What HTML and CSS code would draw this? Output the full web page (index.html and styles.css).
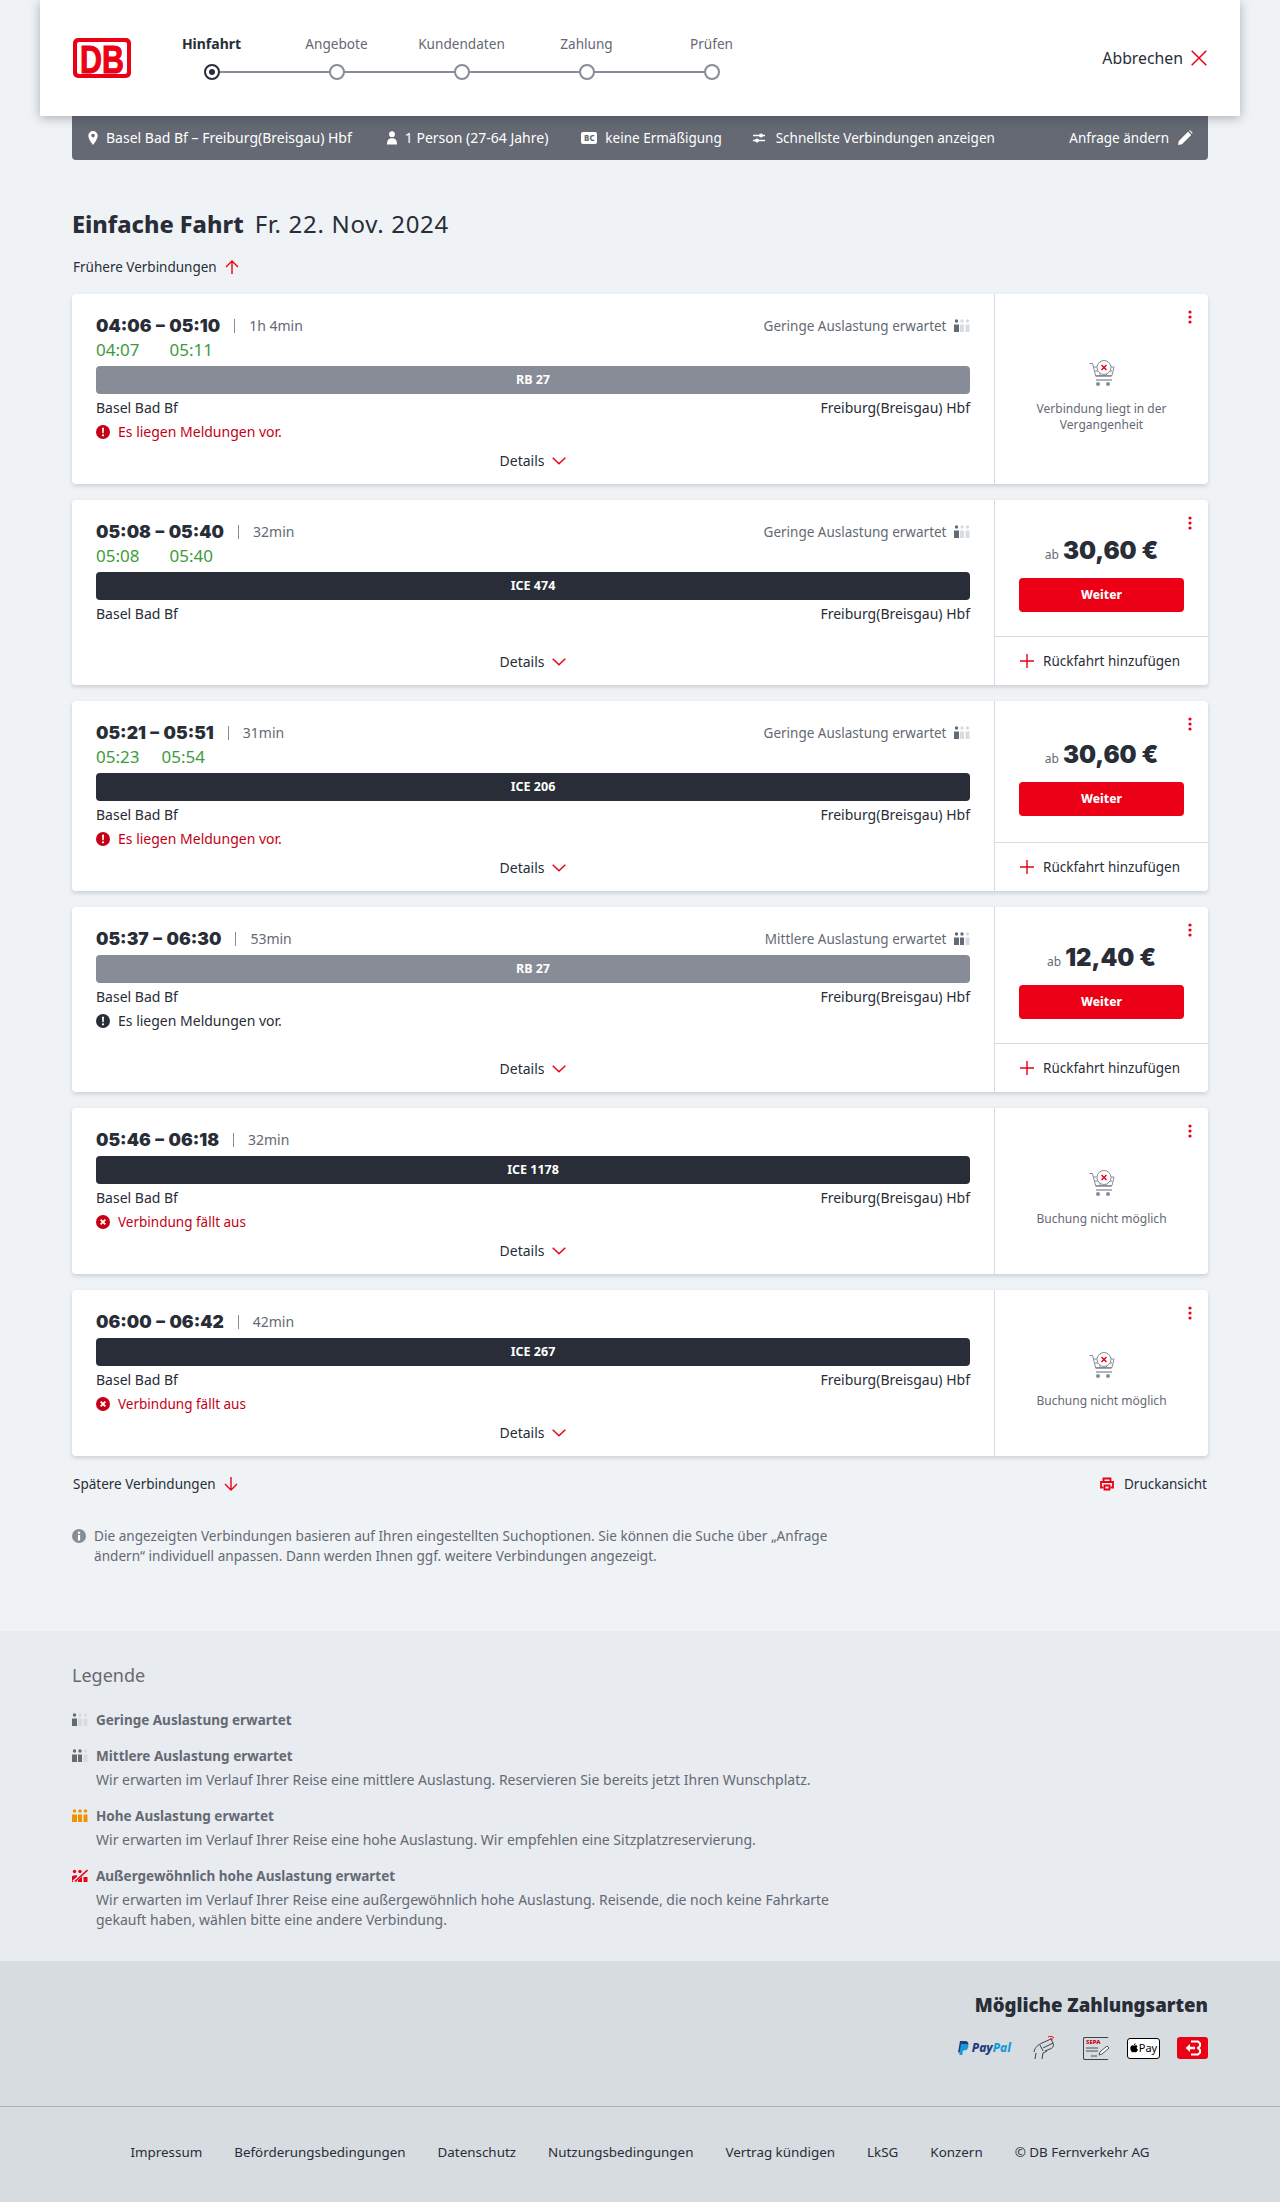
FILE: index.html
```html
<!DOCTYPE html>
<html lang="de">
<head>
<meta charset="utf-8">
<title>Einfache Fahrt</title>
<link rel="stylesheet" href="styles.css">
</head>
<body>
<svg class="sprite" aria-hidden="true">
  <symbol id="occ1" viewBox="0 0 16 14"><circle cx="2.500" cy="2" r="1.700" fill="#646973"/><path d="M0 5.500h5V13H0z" fill="#646973"/><circle cx="8" cy="2" r="1.700" fill="#d7dce1"/><path d="M6 5.500h4V13H6z" fill="#d7dce1"/><circle cx="13.500" cy="2" r="1.700" fill="#d7dce1"/><path d="M11.500 5.500h4V13h-4z" fill="#d7dce1"/></symbol>
  <symbol id="occ2" viewBox="0 0 16 14"><circle cx="2.500" cy="2" r="1.700" fill="#646973"/><path d="M0 5.500h5V13H0z" fill="#646973"/><circle cx="8" cy="2" r="1.700" fill="#646973"/><path d="M6 5.500h4V13H6z" fill="#646973"/><circle cx="13.500" cy="2" r="1.700" fill="#d7dce1"/><path d="M11.500 5.500h4V13h-4z" fill="#d7dce1"/></symbol>
  <symbol id="occ3" viewBox="0 0 16 14"><g fill="#f39200"><circle cx="2.500" cy="2" r="1.700"/><path d="M0 5.500h5V13H0z"/><circle cx="8" cy="2" r="1.700"/><path d="M6 5.500h4V13H6z"/><circle cx="13.500" cy="2" r="1.700"/><path d="M11.500 5.500h4V13h-4z"/></g></symbol>
  <symbol id="occ4" viewBox="0 0 16 14"><g fill="#ec0016"><circle cx="2.500" cy="2.500" r="1.700"/><path d="M0 7l5-1v7H0z"/><circle cx="8" cy="2.500" r="1.700"/><path d="M6 9l4-3v7H6z"/><path d="M11.500 8h4v5h-4z"/></g><path d="M1.500 13L15 1" stroke="#e8ebf0" stroke-width="3.200"/><path d="M3 12.500L15.500 1" stroke="#ec0016" stroke-width="1.600"/></symbol>
  <symbol id="chev" viewBox="0 0 14 8"><path d="M.7.7L7 6.800 13.300.7" fill="none" stroke="#ec0016" stroke-width="1.500"/></symbol>
  <symbol id="dots" viewBox="0 0 4 14"><g fill="#ec0016"><circle cx="2" cy="2" r="1.600"/><circle cx="2" cy="7" r="1.600"/><circle cx="2" cy="12" r="1.600"/></g></symbol>
  <symbol id="plus" viewBox="0 0 14 14"><path d="M7 0v14M0 7h14" stroke="#ec0016" stroke-width="1.400"/></symbol>
  <symbol id="warn" viewBox="0 0 14 14"><circle cx="7" cy="7" r="7"/><path d="M6 2.800h2l-.3 5.400H6.300z" fill="#fff"/><circle cx="7" cy="10.300" r="1.100" fill="#fff"/></symbol>
  <symbol id="cancel" viewBox="0 0 14 14"><circle cx="7" cy="7" r="7" fill="#c50014"/><path d="M4.700 4.700l4.600 4.600M9.300 4.700L4.700 9.300" stroke="#fff" stroke-width="1.900"/></symbol>
  <symbol id="cart" viewBox="0 0 26 26"><g fill="none" stroke="#878c96" stroke-width="1"><path d="M.5 3.500h3l3.300 12.800h15.700"/><path d="M4.500 7h3.300M21.500 7h3.500l-2 8.500H6.500"/><path d="M6 11h17M11 11v4.500M17.500 11v4.500"/><path d="M7 20h16" stroke-width="1.300"/><circle cx="15" cy="7.500" r="7" fill="#fff"/></g><circle cx="9" cy="24" r="2" fill="#878c96"/><circle cx="19" cy="24" r="2" fill="#878c96"/><path d="M12.500 5l5 5M17.500 5l-5 5" stroke="#ec0016" stroke-width="1.500"/></symbol>
</svg>

<header class="top">
  <svg class="logo" viewBox="0 0 58 40" role="img" aria-label="DB"><rect width="58" height="40" rx="5" fill="#ec0016"/><rect x="4" y="4" width="50" height="32" rx="2" fill="#fff"/><text x="29" y="34.700" text-anchor="middle" class="logo-text" textLength="44" lengthAdjust="spacingAndGlyphs">DB</text></svg>
  <ol class="steps">
    <li class="step is-current"><span class="step-label">Hinfahrt</span><span class="step-dot"></span></li>
    <li class="step"><span class="step-label">Angebote</span><span class="step-dot"></span></li>
    <li class="step"><span class="step-label">Kundendaten</span><span class="step-dot"></span></li>
    <li class="step"><span class="step-label">Zahlung</span><span class="step-dot"></span></li>
    <li class="step"><span class="step-label">Prüfen</span><span class="step-dot"></span></li>
  </ol>
  <a class="cancel-link">Abbrechen
    <svg class="cancel-x" viewBox="0 0 16 16"><path d="M.7.7l14.600 14.600M15.300.7L.7 15.300" stroke="#ec0016" stroke-width="1.500"/></svg>
  </a>
</header>

<main class="main">
  <div class="summary">
    <span class="sum-item sum-route"><svg class="sum-icon" viewBox="0 0 14 14"><path d="M7 0a4.700 4.700 0 0 0-4.700 4.700C2.300 8 7 14 7 14s4.700-6 4.700-9.300A4.700 4.700 0 0 0 7 0zm0 6.400a1.800 1.800 0 1 1 0-3.600 1.800 1.800 0 0 1 0 3.600z" fill="#fff"/></svg>Basel Bad Bf – Freiburg(Breisgau) Hbf</span>
    <span class="sum-item sum-person"><svg class="sum-icon" viewBox="0 0 14 14"><circle cx="7" cy="3.200" r="2.900" fill="#fff"/><path d="M2 13.500c0-5 2-6.300 5-6.300s5 1.300 5 6.300z" fill="#fff"/></svg>1 Person (27-64 Jahre)</span>
    <span class="sum-item sum-bc"><span class="bc">BC</span>keine Ermäßigung</span>
    <span class="sum-item sum-filter"><svg class="sum-icon" viewBox="0 0 14 14"><path d="M1 4.500h12M1 9.500h12" stroke="#fff" stroke-width="1.400"/><circle cx="9" cy="4.500" r="2" fill="#fff"/><circle cx="5" cy="9.500" r="2" fill="#fff"/></svg>Schnellste Verbindungen anzeigen</span>
    <span class="sum-item sum-edit">Anfrage ändern<svg class="pencil" viewBox="0 0 16 16"><path d="M1 15l.8-4L11 1.800l3.200 3.200L5 14.200z M12 .8l1-.6 2.600 2.600-.6 1z" fill="#fff"/></svg></span>
  </div>

  <h1 class="title"><strong>Einfache Fahrt</strong><span>Fr. 22. Nov. 2024</span></h1>
  <a class="pager">Frühere Verbindungen <svg class="arrow" viewBox="0 0 14 14"><path d="M7 14V1M1 7l6-6 6 6" fill="none" stroke="#ec0016" stroke-width="1.400"/></svg></a>

  <section class="cards">
    <article class="card">
      <div class="card-main">
        <div class="row-time"><b class="times">04:06 – 05:10</b><i class="sep"></i><span class="dur">1h 4min</span><span class="load">Geringe Auslastung erwartet <svg class="occ"><use href="#occ1"/></svg></span></div>
        <div class="row-rt"><span>04:07</span><span>05:11</span></div>
        <div class="train train-grey">RB 27</div>
        <div class="stations"><span>Basel Bad Bf</span><span>Freiburg(Breisgau) Hbf</span></div>
        <div class="msg msg-red"><svg class="msg-icon"><use href="#warn"/></svg>Es liegen Meldungen vor.</div>
        <div class="details">Details <svg class="chev"><use href="#chev"/></svg></div>
      </div>
      <aside class="card-side">
        <svg class="dots"><use href="#dots"/></svg>
        <div class="side-na"><svg class="cart"><use href="#cart"/></svg><p>Verbindung liegt in der Vergangenheit</p></div>
      </aside>
    </article>

    <article class="card">
      <div class="card-main">
        <div class="row-time"><b class="times">05:08 – 05:40</b><i class="sep"></i><span class="dur">32min</span><span class="load">Geringe Auslastung erwartet <svg class="occ"><use href="#occ1"/></svg></span></div>
        <div class="row-rt"><span>05:08</span><span>05:40</span></div>
        <div class="train">ICE 474</div>
        <div class="stations"><span>Basel Bad Bf</span><span>Freiburg(Breisgau) Hbf</span></div>
        <div class="msg-none"></div>
        <div class="details">Details <svg class="chev"><use href="#chev"/></svg></div>
      </div>
      <aside class="card-side">
        <svg class="dots"><use href="#dots"/></svg>
        <div class="side-offer"><div class="price"><small>ab</small> <b>30,60 €</b></div><a class="btn">Weiter</a></div>
        <div class="side-return"><svg class="plus"><use href="#plus"/></svg>Rückfahrt hinzufügen</div>
      </aside>
    </article>

    <article class="card">
      <div class="card-main">
        <div class="row-time"><b class="times">05:21 – 05:51</b><i class="sep"></i><span class="dur">31min</span><span class="load">Geringe Auslastung erwartet <svg class="occ"><use href="#occ1"/></svg></span></div>
        <div class="row-rt row-rt-narrow"><span>05:23</span><span>05:54</span></div>
        <div class="train">ICE 206</div>
        <div class="stations"><span>Basel Bad Bf</span><span>Freiburg(Breisgau) Hbf</span></div>
        <div class="msg msg-red"><svg class="msg-icon"><use href="#warn"/></svg>Es liegen Meldungen vor.</div>
        <div class="details">Details <svg class="chev"><use href="#chev"/></svg></div>
      </div>
      <aside class="card-side">
        <svg class="dots"><use href="#dots"/></svg>
        <div class="side-offer"><div class="price"><small>ab</small> <b>30,60 €</b></div><a class="btn">Weiter</a></div>
        <div class="side-return"><svg class="plus"><use href="#plus"/></svg>Rückfahrt hinzufügen</div>
      </aside>
    </article>

    <article class="card">
      <div class="card-main">
        <div class="row-time"><b class="times">05:37 – 06:30</b><i class="sep"></i><span class="dur">53min</span><span class="load">Mittlere Auslastung erwartet <svg class="occ"><use href="#occ2"/></svg></span></div>
        <div class="train train-grey">RB 27</div>
        <div class="stations"><span>Basel Bad Bf</span><span>Freiburg(Breisgau) Hbf</span></div>
        <div class="msg"><svg class="msg-icon"><use href="#warn"/></svg>Es liegen Meldungen vor.</div>
        <div class="details">Details <svg class="chev"><use href="#chev"/></svg></div>
      </div>
      <aside class="card-side">
        <svg class="dots"><use href="#dots"/></svg>
        <div class="side-offer"><div class="price"><small>ab</small> <b>12,40 €</b></div><a class="btn">Weiter</a></div>
        <div class="side-return"><svg class="plus"><use href="#plus"/></svg>Rückfahrt hinzufügen</div>
      </aside>
    </article>

    <article class="card">
      <div class="card-main">
        <div class="row-time"><b class="times">05:46 – 06:18</b><i class="sep"></i><span class="dur">32min</span></div>
        <div class="train">ICE 1178</div>
        <div class="stations"><span>Basel Bad Bf</span><span>Freiburg(Breisgau) Hbf</span></div>
        <div class="msg msg-red msg-cancel"><svg class="msg-icon"><use href="#cancel"/></svg>Verbindung fällt aus</div>
        <div class="details">Details <svg class="chev"><use href="#chev"/></svg></div>
      </div>
      <aside class="card-side">
        <svg class="dots"><use href="#dots"/></svg>
        <div class="side-na"><svg class="cart"><use href="#cart"/></svg><p>Buchung nicht möglich</p></div>
      </aside>
    </article>

    <article class="card">
      <div class="card-main">
        <div class="row-time"><b class="times">06:00 – 06:42</b><i class="sep"></i><span class="dur">42min</span></div>
        <div class="train">ICE 267</div>
        <div class="stations"><span>Basel Bad Bf</span><span>Freiburg(Breisgau) Hbf</span></div>
        <div class="msg msg-red msg-cancel"><svg class="msg-icon"><use href="#cancel"/></svg>Verbindung fällt aus</div>
        <div class="details">Details <svg class="chev"><use href="#chev"/></svg></div>
      </div>
      <aside class="card-side">
        <svg class="dots"><use href="#dots"/></svg>
        <div class="side-na"><svg class="cart"><use href="#cart"/></svg><p>Buchung nicht möglich</p></div>
      </aside>
    </article>
  </section>

  <div class="after-cards">
    <a class="pager">Spätere Verbindungen <svg class="arrow" viewBox="0 0 14 14"><path d="M7 0v13M1 7l6 6 6-6" fill="none" stroke="#ec0016" stroke-width="1.400"/></svg></a>
    <a class="print"><svg class="print-icon" viewBox="0 0 14 14"><g fill="none" stroke="#ec0016" stroke-width="1.800"><path d="M3.500 5V1.500h7V5"/><path d="M3.500 10.500H1V5h12v5.500h-2.500"/><path d="M4.500 8.500h5v4h-5z"/></g></svg>Druckansicht</a>
  </div>

  <div class="note">
    <svg class="note-icon" viewBox="0 0 14 14"><circle cx="7" cy="7" r="7" fill="#878c96"/><circle cx="7" cy="3.700" r="1.200" fill="#fff"/><path d="M5.900 6h2.200v5.500H5.900z" fill="#fff"/></svg>
    <p>Die angezeigten Verbindungen basieren auf Ihren eingestellten Suchoptionen. Sie können die Suche über „Anfrage ändern“ individuell anpassen. Dann werden Ihnen ggf. weitere Verbindungen angezeigt.</p>
  </div>
</main>

<section class="legend">
  <h2 class="legend-title">Legende</h2>
  <dl class="legend-list">
    <div class="legend-item"><dt><svg class="occ"><use href="#occ1"/></svg>Geringe Auslastung erwartet</dt></div>
    <div class="legend-item"><dt><svg class="occ"><use href="#occ2"/></svg>Mittlere Auslastung erwartet</dt><dd>Wir erwarten im Verlauf Ihrer Reise eine mittlere Auslastung. Reservieren Sie bereits jetzt Ihren Wunschplatz.</dd></div>
    <div class="legend-item"><dt><svg class="occ"><use href="#occ3"/></svg>Hohe Auslastung erwartet</dt><dd>Wir erwarten im Verlauf Ihrer Reise eine hohe Auslastung. Wir empfehlen eine Sitzplatzreservierung.</dd></div>
    <div class="legend-item"><dt><svg class="occ"><use href="#occ4"/></svg>Außergewöhnlich hohe Auslastung erwartet</dt><dd>Wir erwarten im Verlauf Ihrer Reise eine außergewöhnlich hohe Auslastung. Reisende, die noch keine Fahrkarte gekauft haben, wählen bitte eine andere Verbindung.</dd></div>
  </dl>
</section>

<section class="pay">
  <h2 class="pay-title">Mögliche Zahlungsarten</h2>
  <div class="pay-icons">
    <span class="paypal"><svg class="pp-mark" viewBox="0 0 12 14"><path d="M3 0h5c2.500 0 3.800 1.300 3.300 3.500C10.800 6 9 7 6.800 7H5l-.8 4.500H1z" fill="#253b80"/><path d="M4 3h5c1.800 0 2.800 1 2.400 3-.5 2.500-2.200 3.500-4.400 3.500H6L5.300 14H2.300z" fill="#179bd7"/></svg><b class="pp-a">Pay</b><b class="pp-b">Pal</b></span>
    <svg class="pay-hand" viewBox="0 0 24 24"><g fill="none" stroke="#3d4148" stroke-width="1"><path d="M1 16c1-5 4-7 8-9l9-4 2 4-10 5"/><path d="M7 9l3 6M20 7c1 3 0 5-3 6l-5 2"/><path d="M2 23l1-6M9 23l1-6 4-2"/></g><path d="M15 1c2-1 4-1 6 1M17 3c1-.5 2-.5 3 .5" fill="none" stroke="#ec0016" stroke-width="1"/></svg>
    <span class="sepa"><span class="sepa-t">SEPA</span><svg class="sepa-lines" viewBox="0 0 26 12"><path d="M2 2h12M2 5h12M7 10h6" stroke="#3d4148" stroke-width=".9"/><path d="M15 9l1-3 7-6 2 2-7 6z" fill="#fff" stroke="#3d4148" stroke-width=".9"/></svg></span>
    <span class="apple"><svg class="apple-mark" viewBox="0 0 12 14"><path d="M8.500 0c.1 1.200-1 2.700-2.500 2.700C5.800 1.400 7.100.1 8.500 0zM6 3.600c.7 0 1.600-.7 2.900-.7 1 0 2 .5 2.600 1.400-2.100 1.300-1.800 4.200.5 5.100-.7 1.900-2 4.100-3.300 4.100-.8 0-1.200-.5-2.300-.5s-1.500.5-2.300.5C2.500 13.500.5 10.300.5 7.500.5 4.700 2.200 3 4 3c1 0 1.500.6 2 .6z" fill="#000"/></svg>Pay</span>
    <svg class="pay-db" viewBox="0 0 31 22"><rect width="31" height="22" rx="3" fill="#ec0016"/><path d="M14 4.500h7l2 2v2.500l-2 2 2 2v2.500l-2 2h-7" fill="none" stroke="#fff" stroke-width="2"/><path d="M8.500 11l4.500-4v2.800h5v2.400h-5V15z" fill="#fff"/></svg>
  </div>
</section>

<footer class="foot">
  <a>Impressum</a><a>Beförderungsbedingungen</a><a>Datenschutz</a><a>Nutzungsbedingungen</a><a>Vertrag kündigen</a><a>LkSG</a><a>Konzern</a><a>© DB Fernverkehr AG</a>
</footer>
</body>
</html>
```

FILE: styles.css
```css
* { box-sizing: border-box; }
html, body { margin: 0; padding: 0; }
body {
  background: #eff3f6;
  color: #282d37;
  font-family: "Noto Sans", "Open Sans", Arial, sans-serif;
  font-size: 14px;
  line-height: 24px;
}
.sprite { display: none; }
h1, h2, p, dl, dd, ol { margin: 0; padding: 0; }

/* header */
.top {
  position: relative;
  z-index: 2;
  display: flex;
  align-items: center;
  width: 1200px;
  height: 116px;
  margin: 0 40px;
  padding: 0 33px;
  background: #fff;
  box-shadow: 0 2px 10px rgba(40, 45, 55, .35);
}
.logo { width: 58px; height: 40px; flex: none; overflow: visible; }
.logo-text { font: 700 38px "Liberation Sans", Arial, sans-serif; fill: #ec0016; stroke: #ec0016; stroke-width: 1px; }
.steps { display: flex; list-style: none; margin-left: 18px; }
.step {
  position: relative;
  display: flex;
  flex-direction: column;
  align-items: center;
  width: 125px;
  margin-bottom: 2px;
  color: #646973;
  font-size: 13.600px;
}
.step-label { line-height: 20px; }
.step-dot {
  position: relative;
  z-index: 1;
  width: 16px;
  height: 16px;
  margin-top: 10px;
  border: 2px solid #878c96;
  border-radius: 50%;
  background: #fff;
}
.step:not(:last-child)::after {
  content: "";
  position: absolute;
  left: 50%;
  bottom: 7px;
  width: 125px;
  height: 2px;
  background: #878c96;
}
.is-current { color: #282d37; }
.is-current .step-label { font-weight: 700; font-size: 14px; }
.is-current .step-dot { border-color: #282d37; }
.is-current .step-dot::after {
  content: "";
  display: block;
  width: 6px;
  height: 6px;
  margin: 3px;
  border-radius: 50%;
  background: #282d37;
}
.cancel-link {
  display: flex;
  align-items: center;
  gap: 8px;
  margin-left: auto;
  font-size: 15.800px;
}
.cancel-x { width: 16px; height: 16px; }

/* main */
.main { padding: 0 72px; }
.summary {
  display: flex;
  align-items: center;
  height: 44px;
  padding: 0 15px 0 14px;
  background: #646973;
  color: #fff;
  border-radius: 0 0 4px 4px;
}
.sum-item { display: flex; align-items: center; gap: 6px; white-space: nowrap; }
.sum-person { margin-left: 33px; }
.sum-bc { margin-left: 33px; gap: 8px; font-size: 13.500px; }
.sum-filter { margin-left: 30px; gap: 10px; font-size: 13.500px; }
.sum-edit { margin-left: auto; gap: 8px; font-size: 13.500px; }
.sum-icon { width: 14px; height: 14px; flex: none; }
.pencil { width: 16px; height: 16px; }
.bc {
  display: inline-block;
  width: 16px;
  height: 12px;
  border-radius: 2px;
  background: #fff;
  color: #646973;
  font-size: 8px;
  font-weight: 800;
  line-height: 12px;
  text-align: center;
}
.title {
  display: flex;
  gap: 11px;
  margin-top: 48px;
  font-size: 24px;
  font-weight: 400;
  line-height: 32px;
}
.title strong { font-weight: 800; font-size: 23.500px; }
.title span { letter-spacing: .7px; }
.pager { display: inline-flex; align-items: center; gap: 8px; height: 24px; font-size: 13.500px; }
.main > .pager { margin: 15px 0 15px 1px; display: flex; }
.arrow { width: 14px; height: 14px; }

/* cards */
.cards { display: flex; flex-direction: column; gap: 16px; }
.card {
  position: relative;
  display: flex;
  min-height: 165px;
  background: #fff;
  border-radius: 4px;
  box-shadow: 0 2px 4px rgba(40, 45, 55, .18);
}
.card-main {
  flex: 1;
  display: flex;
  flex-direction: column;
  min-width: 0;
  padding: 20px 24px 11px;
  border-right: 1px solid #d7dce1;
}
.row-time { display: flex; align-items: center; height: 24px; }
.times { font-family: Inter, "Noto Sans", sans-serif; font-size: 17.500px; font-weight: 900; word-spacing: 1px; }
.sep { width: 1px; height: 14px; margin: 0 14px; background: #878c96; }
.dur { color: #646973; }
.load { display: flex; align-items: center; gap: 4px; margin-left: auto; color: #646973; font-size: 13.500px; white-space: pre; }
.occ { width: 16px; height: 14px; flex: none; }
.row-rt { display: flex; gap: 30px; height: 24px; color: #3e9a3c; font-size: 17px; }
.row-rt-narrow { gap: 22px; }
.train {
  height: 28px;
  margin-top: 4px;
  background: #282d37;
  color: #fff;
  border-radius: 4px;
  font-size: 12.500px;
  font-weight: 700;
  line-height: 28px;
  text-align: center;
}
.train-grey { background: #878c96; }
.stations { display: flex; justify-content: space-between; margin-top: 2px; }
.msg { display: flex; align-items: center; gap: 8px; height: 24px; margin-bottom: 5px; }
.msg-none { height: 22px; }
.msg-red { color: #c50014; }
.msg-cancel { font-size: 13.500px; }
.msg-icon { width: 14px; height: 14px; fill: #282d37; }
.msg-red .msg-icon { fill: #c50014; }
.details {
  display: flex;
  align-items: center;
  justify-content: center;
  gap: 8px;
  height: 24px;
  margin-top: auto;
}
.chev { width: 14px; height: 8px; }

/* right column */
.card-side { position: relative; display: flex; flex-direction: column; width: 213px; flex: none; }
.dots { position: absolute; top: 16px; right: 16px; width: 4px; height: 14px; }
.side-na {
  flex: 1;
  display: flex;
  flex-direction: column;
  align-items: center;
  justify-content: center;
  padding: 14px 24px 0;
  text-align: center;
  color: #646973;
  font-size: 12px;
  line-height: 16px;
}
.cart { width: 26px; height: 26px; margin-bottom: 15px; }
.side-offer {
  flex: 1;
  display: flex;
  flex-direction: column;
  align-items: center;
  justify-content: center;
  gap: 10px;
  padding: 34px 24px 24px;
  border-bottom: 1px solid #d7dce1;
}
.price { display: flex; align-items: baseline; gap: 4px; height: 34px; color: #282d37; line-height: 34px; }
.price small { font-size: 12px; color: #646973; }
.price b { font-family: Inter, "Noto Sans", sans-serif; font-size: 24px; font-weight: 900; }
.btn {
  display: block;
  width: 165px;
  height: 34px;
  background: #ec0016;
  color: #fff;
  border-radius: 4px;
  font-size: 12px;
  font-weight: 800;
  line-height: 34px;
  text-align: center;
}
.side-return {
  display: flex;
  align-items: center;
  gap: 9px;
  height: 48px;
  padding-left: 25px;
  font-size: 13.500px;
}
.plus { width: 14px; height: 14px; }

.after-cards {
  display: flex;
  justify-content: space-between;
  align-items: center;
  margin-top: 16px;
  padding: 0 1px;
}
.print { display: flex; align-items: center; gap: 10px; font-size: 13.500px; }
.print-icon { width: 14px; height: 14px; }
.note {
  display: flex;
  gap: 8px;
  width: 790px;
  margin-top: 30px;
  margin-bottom: 65px;
  color: #646973;
  font-size: 13.600px;
  line-height: 20px;
}
.note-icon { width: 14px; height: 14px; flex: none; margin-top: 3px; }

/* legend */
.legend { background: #e8ebf0; padding: 32px 72px 31px; color: #646973; }
.legend-title { font-size: 18px; font-weight: 400; line-height: 24px; }
.legend-list { display: flex; flex-direction: column; gap: 16px; margin-top: 23px; width: 760px; }
.legend-item dt { display: flex; align-items: center; gap: 8px; font-size: 13.500px; font-weight: 700; line-height: 20px; }
.legend-item dd { margin: 4px 0 0 24px; line-height: 20px; }

/* payment */
.pay { background: #d7dce1; padding: 30px 72px 46px; }
.pay-title { font-size: 18.600px; font-weight: 900; line-height: 28px; text-align: right; }
.pay-icons { display: flex; align-items: center; justify-content: flex-end; height: 24px; margin-top: 17px; }
.paypal { display: flex; align-items: center; gap: 3px; font-size: 12px; font-style: italic; margin-right: 22px; }
.pp-mark { width: 12px; height: 14px; }
.pp-a { color: #253b80; font-weight: 800; }
.pp-b { color: #179bd7; font-weight: 800; margin-left: -3px; }
.pay-hand { width: 24px; height: 24px; margin-right: 26px; }
.sepa {
  display: flex;
  flex-direction: column;
  width: 26px;
  height: 23px;
  margin-right: 18px;
  border: 1px solid #3d4148;
  border-right-color: transparent;
  border-radius: 2px;
}
.sepa-t { color: #c50014; font-size: 6px; font-weight: 800; line-height: 8px; padding-left: 2px; }
.sepa-lines { width: 26px; height: 12px; }
.apple {
  display: flex;
  align-items: center;
  justify-content: center;
  gap: 1px;
  width: 33px;
  height: 21px;
  margin-right: 17px;
  background: #fff;
  border: 1px solid #000;
  border-radius: 3px;
  color: #000;
  font-size: 11px;
}
.apple-mark { width: 8px; height: 10px; }
.pay-db { width: 31px; height: 22px; }

/* footer */
.foot {
  display: flex;
  justify-content: center;
  gap: 32px;
  height: 96px;
  padding-top: 33px;
  background: #d7dce1;
  border-top: 1px solid #aeb2b8;
  font-size: 13.400px;
}
```
